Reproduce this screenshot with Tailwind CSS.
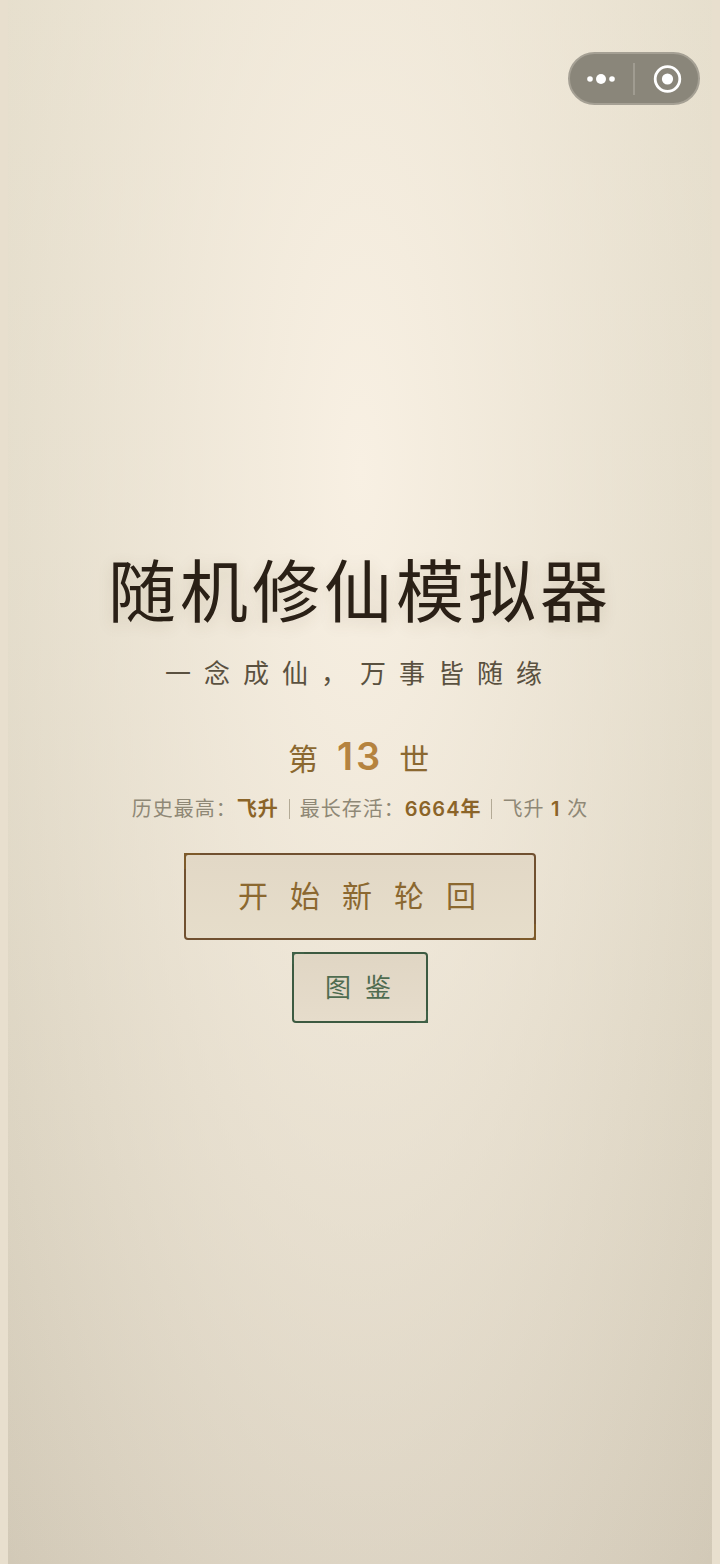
<!DOCTYPE html>
<html lang="zh-CN">
  <head>
    <meta charset="UTF-8" />
    <title>随机修仙模拟器</title>
    <meta name="viewport" content="width=device-width, initial-scale=1.0" />
    <script src="https://cdn.jsdelivr.net/npm/@tailwindcss/browser@4"></script>
  </head>
  <body class="min-h-screen flex flex-col bg-[#e8dfce] px-2 font-['Inter','Noto_Sans_CJK_SC',sans-serif]">

    <!-- Page -->
    <main class="relative flex-1 flex flex-col items-center justify-center pt-0.5 bg-[radial-gradient(ellipse_at_50%_30%,#f8f0e3_0%,rgba(248,240,227,0)_100%),linear-gradient(to_bottom,#e1dac7_0%,#ddd6c3_35%,#d7cfbc_70%,#d2c9b7_100%)]">

      <!-- Mini program menu -->
      <div class="absolute top-[52px] right-3 flex items-center w-[132px] h-[53px] rounded-full border-2 border-[#a5a094] bg-[#8a867a]">
        <button aria-label="更多" class="flex-1 h-full flex items-center justify-center">
          <svg class="w-8 h-8" viewBox="0 0 32 32" fill="#fff">
            <circle cx="4" cy="16" r="2.8" />
            <circle cx="15" cy="16" r="5" />
            <circle cx="26" cy="16" r="2.8" />
          </svg>
        </button>
        <span class="w-0.5 h-8 bg-[#a09c91]"></span>
        <button aria-label="关闭" class="flex-1 h-full flex items-center justify-center">
          <svg class="w-8 h-8" viewBox="0 0 32 32" fill="none">
            <circle cx="16.5" cy="16" r="12.3" stroke="#fff" stroke-width="2.8" />
            <circle cx="16.5" cy="16" r="5.6" fill="#fff" />
          </svg>
        </button>
      </div>

      <!-- Title -->
      <h1 class="text-[68px] leading-[96px] tracking-[4px] text-[#2a2016] [text-shadow:0_4px_16px_rgba(90,70,30,0.15)]">随机修仙模拟器</h1>
      <p class="mt-3.5 text-[26px] leading-10 tracking-[13px] text-[#5a5140]">一念成仙，万事皆随缘</p>

      <!-- Record -->
      <p class="mt-9 flex items-baseline gap-4 text-[30px] leading-[52px] tracking-[3px] text-[#8b6830]">
        <span>第</span>
        <strong class="text-[38px] font-semibold text-[#b5833f]">13</strong>
        <span>世</span>
      </p>
      <div class="mt-2 flex items-center text-[20px] leading-8 tracking-[1px] text-[#8f8876]">
        <span>历史最高：<b class="font-semibold text-[#8b6428]">飞升</b></span>
        <span class="w-px h-5 mx-2.5 bg-[#b3aa96]"></span>
        <span>最长存活：<b class="font-semibold text-[#8b6428]">6664年</b></span>
        <span class="w-px h-5 mx-2.5 bg-[#b3aa96]"></span>
        <span>飞升 <b class="font-semibold text-[#8b6428]">1</b> 次</span>
      </div>

      <!-- Actions -->
      <button class="relative mt-7 h-[87px] pl-[52px] pr-9 rounded border-2 border-[#705030] bg-linear-to-b from-[#e2d8c6] to-[#e6ddca] text-[30px] tracking-[22px] text-[#8b6830]">
        <span class="absolute -top-0.5 -left-0.5 size-4 border-t-2 border-l-2 border-[#7d5a2a]"></span>
        开始新轮回
        <span class="absolute -bottom-0.5 -right-0.5 size-4 border-b-2 border-r-2 border-[#7d5a2a]"></span>
      </button>
      <button class="relative mt-3 h-[71px] pl-[31px] pr-[21px] rounded border-2 border-[#3c5a41] bg-linear-to-b from-[#e0d6c4] to-[#e6dccb] text-[26px] tracking-[14px] text-[#4f6c50]">
        <span class="absolute -top-0.5 -left-0.5 size-3 border-t-2 border-l-2 border-[#3f6046]"></span>
        图鉴
        <span class="absolute -bottom-0.5 -right-0.5 size-3 border-b-2 border-r-2 border-[#3f6046]"></span>
      </button>
    </main>
  </body>
</html>
